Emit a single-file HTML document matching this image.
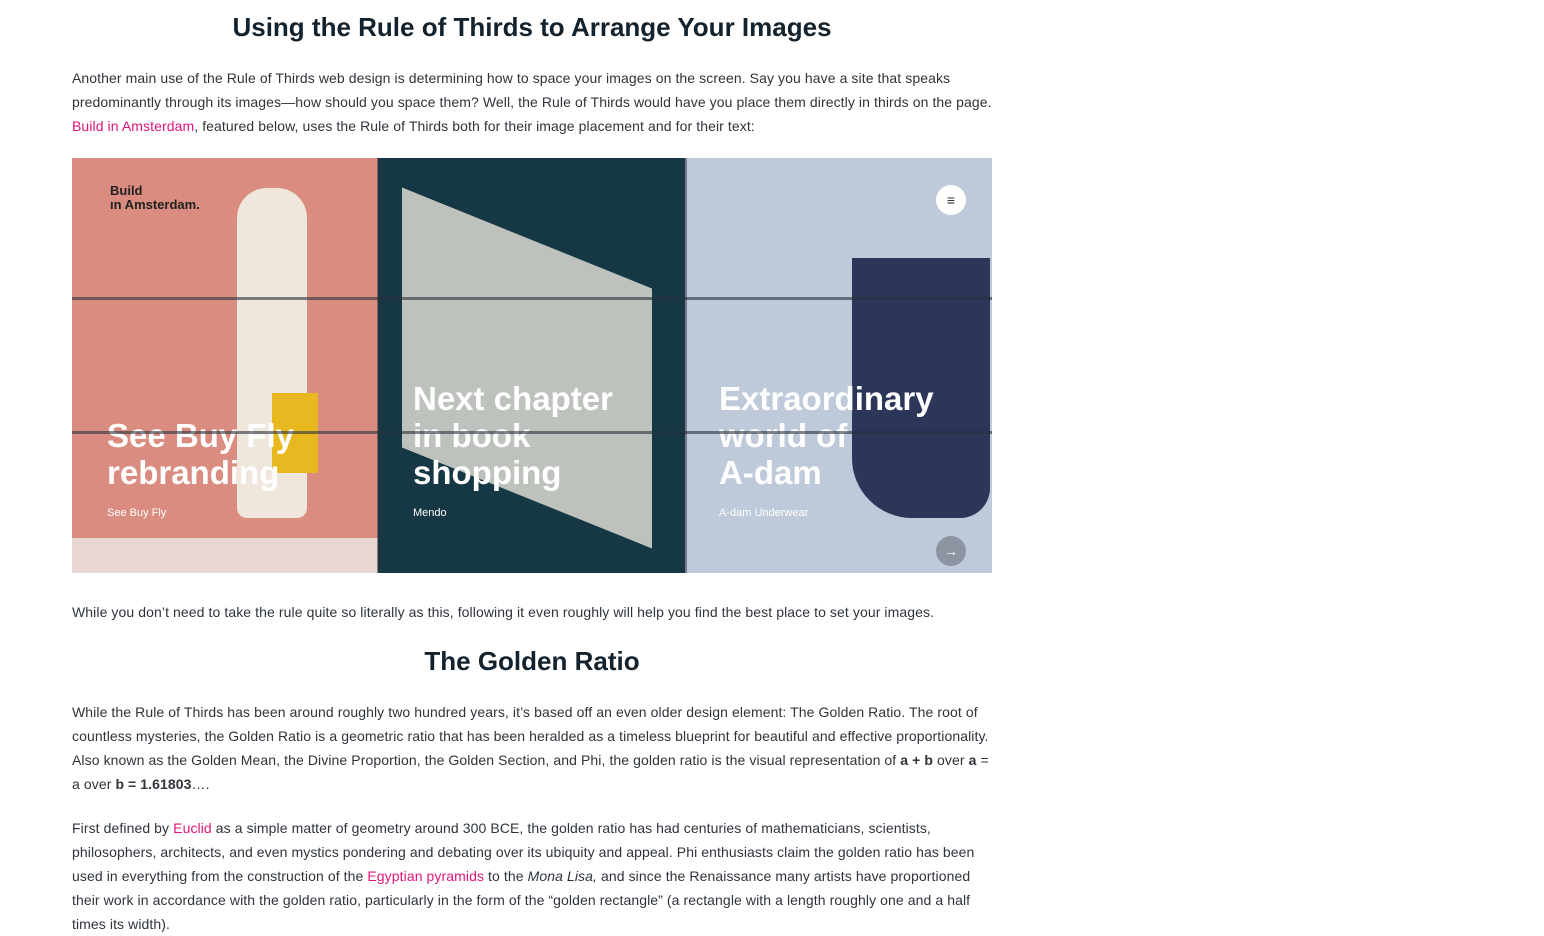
<!DOCTYPE html>
<html><head><meta charset="utf-8"><style>
body{margin:0;background:#fff;font-family:"Liberation Sans",Arial,sans-serif;}
h2{margin:0;font-size:26px;font-weight:bold;color:#13222d;text-align:center;position:absolute;left:72px;width:920px;}
p{margin:0;font-size:14px;line-height:24px;color:#2e343a;position:absolute;left:72px;width:922px;letter-spacing:0.09px;}
a{color:#e0157c;text-decoration:none;}
.img{position:absolute;left:72px;top:158px;width:920px;height:415px;overflow:hidden;}
.pn{position:absolute;top:0;height:415px;}
.t{position:absolute;color:#fff;font-weight:bold;font-size:33px;line-height:37px;}
.s{position:absolute;color:#fff;font-size:11px;top:349px;}
.hl{position:absolute;left:0;width:920px;height:3px;background:rgba(40,50,60,.6);}
.vl{position:absolute;top:0;height:415px;width:3px;background:rgba(40,50,60,.5);}
</style></head><body>
<h2 style="top:12px">Using the Rule of Thirds to Arrange Your Images</h2>
<p style="top:66px">Another main use of the Rule of Thirds web design is determining how to space your images on the screen. Say you have a site that speaks predominantly through its images—how should you space them? Well, the Rule of Thirds would have you place them directly in thirds on the page. <a>Build in Amsterdam</a>, featured below, uses the Rule of Thirds both for their image placement and for their text:</p>
<div class="img">
 <div class="pn" style="left:0;width:306px;background:#d98c7f"></div>
 <div style="position:absolute;left:0;top:380px;width:306px;height:35px;background:#e8d6d2"></div>
 <div style="position:absolute;left:165px;top:30px;width:70px;height:330px;background:#efe7dc;border-radius:30px 30px 10px 10px"></div>
 <div style="position:absolute;left:200px;top:235px;width:46px;height:80px;background:#e8b820"></div>
 <div class="pn" style="left:306px;width:307px;background:#163744"></div>
 <div style="position:absolute;left:330px;top:80px;width:250px;height:260px;background:#cfd1ca;transform:skewY(22deg);opacity:.9"></div>
 <div class="pn" style="left:613px;width:307px;background:#bec9da"></div>
 <div style="position:absolute;left:780px;top:100px;width:138px;height:260px;background:#2c3658;border-radius:0 0 30px 60px"></div>
 <div style="position:absolute;left:38px;top:26px;font-weight:bold;font-size:13px;line-height:14px;color:#222">Build<br>ın Amsterdam.</div>
 <div style="position:absolute;left:864px;top:27px;width:30px;height:30px;border-radius:50%;background:#fff;text-align:center;line-height:30px;font-size:14px;color:#333">≡</div>
 <div style="position:absolute;left:864px;top:378px;width:30px;height:30px;border-radius:50%;background:#8d95a3;text-align:center;line-height:30px;font-size:14px;color:#fff">→</div>
 <div class="t" style="left:35px;top:259px">See Buy Fly<br>rebranding</div>
 <div class="t" style="left:341px;top:222px">Next chapter<br>in book<br>shopping</div>
 <div class="t" style="left:647px;top:222px">Extraordinary<br>world of<br>A-dam</div>
 <div class="s" style="left:35px">See Buy Fly</div>
 <div class="s" style="left:341px">Mendo</div>
 <div class="s" style="left:647px">A-dam Underwear</div>
 <div class="hl" style="top:139px"></div><div class="hl" style="top:273px"></div>
 <div class="vl" style="left:305px"></div><div class="vl" style="left:612px"></div>
</div>
<p style="top:600px">While you don’t need to take the rule quite so literally as this, following it even roughly will help you find the best place to set your images.</p>
<h2 style="top:646px">The Golden Ratio</h2>
<p style="top:700px">While the Rule of Thirds has been around roughly two hundred years, it’s based off an even older design element: The Golden Ratio. The root of countless mysteries, the Golden Ratio is a geometric ratio that has been heralded as a timeless blueprint for beautiful and effective proportionality. Also known as the Golden Mean, the Divine Proportion, the Golden Section, and Phi, the golden ratio is the visual representation of <b>a + b</b> over <b>a</b> = a over <b>b = 1.61803</b>….</p>
<p style="top:816px">First defined by <a>Euclid</a> as a simple matter of geometry around 300 BCE, the golden ratio has had centuries of mathematicians, scientists, philosophers, architects, and even mystics pondering and debating over its ubiquity and appeal. Phi enthusiasts claim the golden ratio has been used in everything from the construction of the <a>Egyptian pyramids</a> to the <i>Mona Lisa,</i> and since the Renaissance many artists have proportioned their work in accordance with the golden ratio, particularly in the form of the “golden rectangle” (a rectangle with a length roughly one and a half times its width).</p>
</body></html>
